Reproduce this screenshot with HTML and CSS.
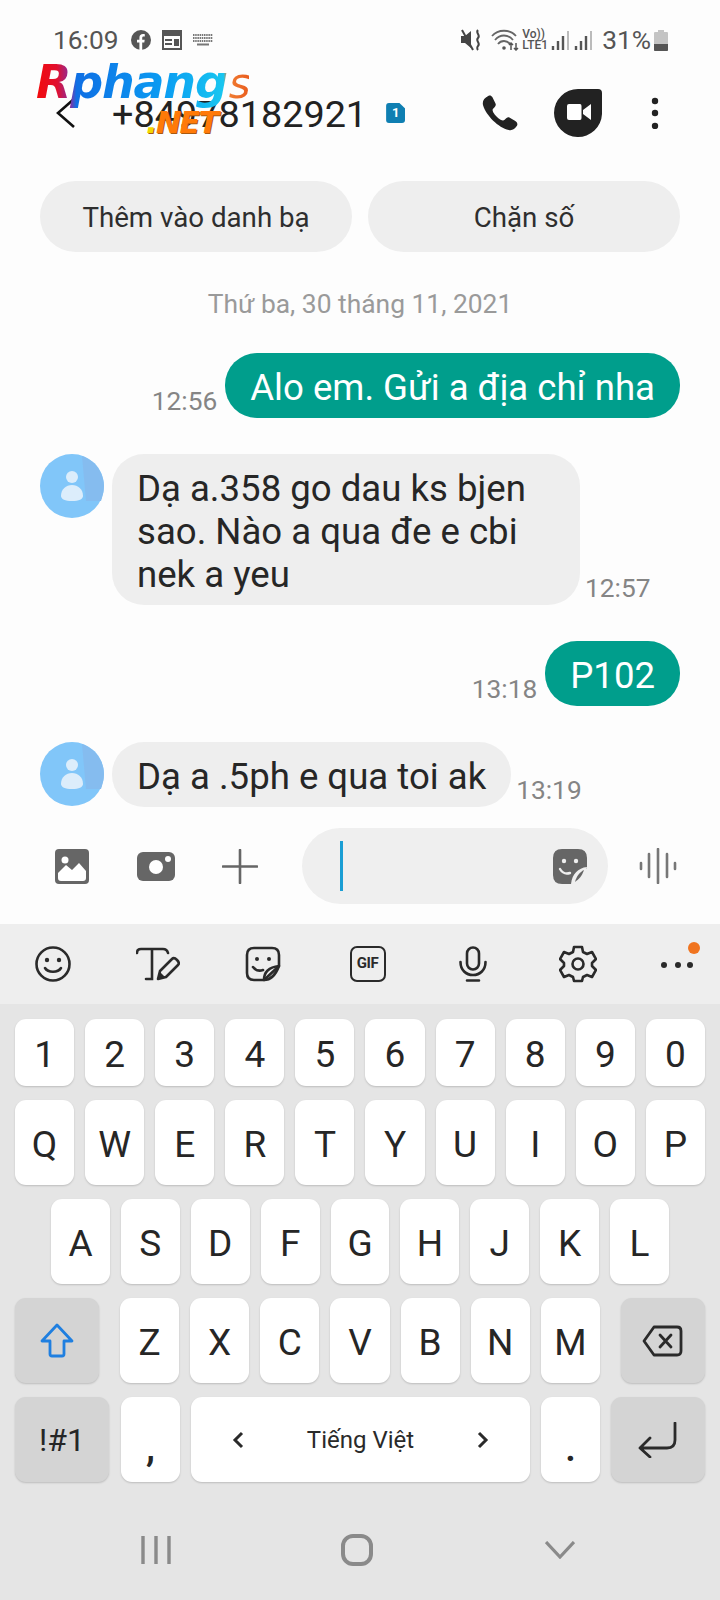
FILE: index.html
```html
<!DOCTYPE html>
<html lang="vi">
<head>
    <meta charset="UTF-8">
    <meta name="viewport" content="width=device-width, initial-scale=1.0">
    <title>Tin nhắn</title>
    <link rel="stylesheet" href="styles.css">
</head>
<body>
<div class="phone">
    <div class="status">
        <span class="clock">16:09</span>
        <svg class="st-fb" width="20" height="20" viewBox="0 0 20 20"><circle cx="10" cy="10" r="10" fill="#555"/><path d="M8.4 20V12.6H6V9.8H8.4V7.7C8.4 5.3 9.8 4 12 4C12.9 4 13.8 4.2 13.8 4.2V6.6H12.6C11.5 6.6 11.2 7.3 11.2 8V9.8H13.7L13.3 12.6H11.2V20Z" fill="#fdfdfd"/></svg>
        <svg class="st-cal" width="20" height="20" viewBox="0 0 20 20"><path d="M1 1H19V19H1Z" fill="none" stroke="#555" stroke-width="2"/><path d="M1 1H19V6H1ZM3 9H10V11H3ZM3 13H10V15H3ZM12 9H17V16H12Z" fill="#555"/></svg>
        <svg class="st-kb" width="20" height="12" viewBox="0 0 20 12"><path d="M0 1H20M0 4H20M0 7H20" stroke="#777" stroke-width="2" stroke-dasharray="1.5 .7"/><path d="M4 10.5H16" stroke="#777" stroke-width="2"/></svg>
        <div class="status-right">
            <svg width="23" height="22" viewBox="0 0 23 22"><path d="M0 7H4L10 2V19L4 14H0Z" fill="#444"/><path d="M1 1L12 21" stroke="#444" stroke-width="2"/><path d="M17 1C14 4 20 6 17 9C14 12 20 14 17 17C16 18 16 20 17 21" fill="none" stroke="#444" stroke-width="2"/></svg>
            <svg class="st-wifi" width="28" height="22" viewBox="0 0 28 22"><path d="M1 7C7 0 19 0 25 7M4 11C9 5 17 5 22 11M7 15C10 11 16 11 19 15" fill="none" stroke="#666" stroke-width="1.8"/><circle cx="13" cy="19" r="1.8" fill="#555"/><path d="M20 21V14M18 16L20 14 22 16M25 14V21M23 19L25 21 27 19" fill="none" stroke="#555" stroke-width="1.5"/></svg>
            <div class="volte"><span>Vo))</span><span>LTE1</span></div>
            <svg class="st-sig" width="19" height="20" viewBox="0 0 19 20"><path d="M2 16V20M7 11V20M12 6V20" stroke="#555" stroke-width="2.4"/><path d="M17 1V20" stroke="#bbb" stroke-width="2"/></svg>
            <svg class="st-sig2" width="19" height="20" viewBox="0 0 19 20"><path d="M2 16V20M7 11V20M12 6V20" stroke="#555" stroke-width="2.4"/><path d="M17 1V20" stroke="#bbb" stroke-width="2"/></svg>
            <span class="pct">31%</span>
            <svg class="st-bat" width="14" height="21" viewBox="0 0 14 21"><path d="M4 0H10V2H13A1 1 0 0 1 14 3V20A1 1 0 0 1 13 21H1A1 1 0 0 1 0 20V3A1 1 0 0 1 1 2H4Z" fill="#c4c4c4"/><path d="M0 14H14V20A1 1 0 0 1 13 21H1A1 1 0 0 1 0 20Z" fill="#555"/></svg>
        </div>
    </div>

    <div class="header">
        <svg class="back" width="20" height="30" viewBox="0 0 20 30"><path d="M18 1L2 15L18 29" fill="none" stroke="#111" stroke-width="2.6"/></svg>
        <span class="number">+84978182921</span>
        <span class="sim">1</span>
        <svg class="call" width="37" height="36" viewBox="0 0 36 35"><path d="M7 1C9 0 10 1 11 2L14 8C15 10 14 11 12 13C11 14 11 15 12 17C14 20 16 22 19 24C21 25 22 25 23 24C25 22 26 21 28 22L33 25C35 26 36 28 35 30C33 33 30 35 27 34C17 32 5 20 2 10C1 6 3 3 7 1Z" fill="#222"/></svg>
        <svg class="duo" width="48" height="49" viewBox="0 0 48 49"><path d="M24 0H44Q48 0 48 4V25A24 24 0 1 1 24 0Z" fill="#222"/><path d="M15 15H26Q27.5 15 27.5 17V29Q27.5 31 26 31H15Q13 31 13 29V17Q13 15 15 15ZM29 21L37 15V31L29 25Z" fill="#fff"/></svg>
        <svg class="more" width="8" height="32" viewBox="0 0 8 32"><circle cx="4" cy="4" r="3.2" fill="#222"/><circle cx="4" cy="16" r="3.2" fill="#222"/><circle cx="4" cy="29" r="3.2" fill="#222"/></svg>
    </div>

    <!-- watermark on top of the header -->
    <div class="logo">Rphang<span class="logo-s">s</span></div>
    <div class="logo-net"><span class="net-dot">.</span>NET</div>

    <div class="actions">
        <div class="pill">Thêm vào danh bạ</div>
        <div class="pill">Chặn số</div>
    </div>

    <div class="date">Thứ ba, 30 tháng 11, 2021</div>

    <div class="msg msg-out first">
        <span class="time">12:56</span>
        <div class="bubble out">Alo em. Gửi a địa chỉ nha</div>
    </div>
    <div class="msg msg-in">
        <svg class="avatar" width="64" height="64" viewBox="0 0 64 64"><circle cx="32" cy="32" r="32" fill="#81c6f9"/><path d="M42 2A32 32 0 0 1 63 40Q62 44 61 47H46Z" fill="#85bcef"/><circle cx="32" cy="23" r="6" fill="#dcedfb"/><path d="M21 42C21 35 26 31 32 31C38 31 43 35 43 42C43 45 39 47 32 47C25 47 21 45 21 42Z" fill="#dcedfb"/></svg>
        <div class="bubble in wide">Dạ a.358 go dau ks bjen<br>sao. Nào a qua đe e cbi<br>nek a yeu</div>
        <span class="time">12:57</span>
    </div>
    <div class="msg msg-out">
        <span class="time">13:18</span>
        <div class="bubble out">P102</div>
    </div>
    <div class="msg msg-in last">
        <svg class="avatar" width="64" height="64" viewBox="0 0 64 64"><circle cx="32" cy="32" r="32" fill="#81c6f9"/><path d="M42 2A32 32 0 0 1 63 40Q62 44 61 47H46Z" fill="#85bcef"/><circle cx="32" cy="23" r="6" fill="#dcedfb"/><path d="M21 42C21 35 26 31 32 31C38 31 43 35 43 42C43 45 39 47 32 47C25 47 21 45 21 42Z" fill="#dcedfb"/></svg>
        <div class="bubble in">Dạ a .5ph e qua toi ak</div>
        <span class="time">13:19</span>
    </div>

    <div class="composer">
        <svg class="c-img" width="34" height="35" viewBox="0 0 34 35"><rect width="34" height="35" rx="4" fill="#666"/><circle cx="10" cy="11" r="3.5" fill="#fff"/><path d="M3 29V24L11 16L17 21L24 14L31 22V29Q31 32 28 32H6Q3 32 3 29Z" fill="#fff"/></svg>
        <svg class="c-cam" width="38" height="29" viewBox="0 0 38 29"><rect width="38" height="29" rx="6" fill="#666"/><circle cx="19" cy="15" r="7" fill="#fff"/><circle cx="31" cy="7" r="3" fill="#fff"/></svg>
        <svg class="c-plus" width="36" height="35" viewBox="0 0 36 35"><path d="M18 1V34M1 17.5H35" stroke="#666" stroke-width="2.6" stroke-linecap="round"/></svg>
        <div class="field">
            <span class="caret"></span>
            <svg class="c-sticker" width="34" height="35" viewBox="0 0 34 35"><path d="M9 0H25Q34 0 34 9V19L19 35H9Q0 35 0 26V9Q0 0 9 0Z" fill="#666"/><circle cx="11" cy="12" r="2.2" fill="#efefef"/><circle cx="23" cy="12" r="2.2" fill="#efefef"/><path d="M7 20C10 25 14 25 17 24" fill="none" stroke="#efefef" stroke-width="2.4" stroke-linecap="round"/><path d="M34 18C25 19 19 25 18 35H23C28 32 32 26 34 18Z" fill="#efefef"/><path d="M31 21C27 23 23.5 27 22 33C26 30 29 27 31 21Z" fill="#666"/></svg>
        </div>
        <svg class="c-voice" width="38" height="36" viewBox="0 0 38 36"><path d="M2 15V21M10 6V29M19 1V35M28 6V29M36 15V21" stroke="#777" stroke-width="2.6" stroke-linecap="round"/></svg>
    </div>

    <div class="toolbar">
        <div class="tool"><svg width="36" height="36" viewBox="0 0 36 36"><circle cx="18" cy="18" r="16.5" fill="none" stroke="#2a2a2a" stroke-width="2.6"/><circle cx="12" cy="14" r="2.2" fill="#2a2a2a"/><circle cx="24" cy="14" r="2.2" fill="#2a2a2a"/><path d="M10 22C13 27 23 27 26 22" fill="none" stroke="#2a2a2a" stroke-width="2.6" stroke-linecap="round"/></svg></div>
        <div class="tool"><svg width="44" height="34" viewBox="0 0 44 34"><path d="M1 6Q1 2 5 2H27Q31 2 32 6M16 2V32H10" fill="none" stroke="#2a2a2a" stroke-width="2.6" stroke-linecap="round"/><path d="M22 32L24 24L36 12Q38 10 41 13Q44 16 42 18L30 30Z" fill="none" stroke="#2a2a2a" stroke-width="2.6" stroke-linejoin="round"/><path d="M22 32L24 25L29 30Z" fill="#2a2a2a"/></svg></div>
        <div class="tool"><svg width="36" height="36" viewBox="0 0 36 36"><path d="M34 20V9Q34 2 27 2H9Q2 2 2 9V27Q2 34 9 34H19Z" fill="none" stroke="#2a2a2a" stroke-width="2.6" stroke-linejoin="round"/><circle cx="12" cy="13" r="2" fill="#2a2a2a"/><circle cx="24" cy="13" r="2" fill="#2a2a2a"/><path d="M8 21C11 25 15 25 18 24" fill="none" stroke="#2a2a2a" stroke-width="2.6" stroke-linecap="round"/><path d="M34 20C25 21 19 25 19 34C26 34 31 28 34 20Z" fill="none" stroke="#2a2a2a" stroke-width="2.6" stroke-linejoin="round"/></svg></div>
        <div class="tool"><div class="gif">GIF</div></div>
        <div class="tool"><svg width="28" height="36" viewBox="0 0 28 36"><rect x="8" y="1.5" width="12" height="22" rx="6" fill="none" stroke="#2a2a2a" stroke-width="2.6"/><path d="M1.5 16C1.5 24 7 29 14 29C21 29 26.5 24 26.5 16M8 34.5H20" fill="none" stroke="#2a2a2a" stroke-width="2.6" stroke-linecap="round"/></svg></div>
        <div class="tool"><svg width="38" height="38" viewBox="0 0 38 38"><path d="M15 2H23L24 7L28 9L33 7L37 14L33 18V21L37 25L33 32L28 30L24 32L23 36H15L14 32L10 30L5 32L1 25L5 21V18L1 14L5 7L10 9L14 7Z" fill="none" stroke="#2a2a2a" stroke-width="2.6" stroke-linejoin="round"/><circle cx="19" cy="19" r="5.5" fill="none" stroke="#2a2a2a" stroke-width="2.6"/></svg></div>
        <div class="tool tool-more"><svg width="40" height="44" viewBox="0 0 40 44"><circle cx="3" cy="23" r="3" fill="#2a2a2a"/><circle cx="17" cy="23" r="3" fill="#2a2a2a"/><circle cx="29" cy="23" r="3" fill="#2a2a2a"/><circle cx="33" cy="6" r="6" fill="#f0741f"/></svg></div>
    </div>

    <div class="keyboard">
        <div class="row row-num">
            <div class="key">1</div><div class="key">2</div><div class="key">3</div><div class="key">4</div><div class="key">5</div><div class="key">6</div><div class="key">7</div><div class="key">8</div><div class="key">9</div><div class="key">0</div>
        </div>
        <div class="row">
            <div class="key">Q</div><div class="key">W</div><div class="key">E</div><div class="key">R</div><div class="key">T</div><div class="key">Y</div><div class="key">U</div><div class="key">I</div><div class="key">O</div><div class="key">P</div>
        </div>
        <div class="row row-home">
            <div class="key">A</div><div class="key">S</div><div class="key">D</div><div class="key">F</div><div class="key">G</div><div class="key">H</div><div class="key">J</div><div class="key">K</div><div class="key">L</div>
        </div>
        <div class="row">
            <div class="key fn shift"><svg width="34" height="35" viewBox="0 0 34 35"><path d="M17 2L32 18H24V31Q24 33 22 33H12Q10 33 10 31V18H2Z" fill="none" stroke="#1f7fe0" stroke-width="2.8" stroke-linejoin="round"/></svg></div>
            <div class="key">Z</div><div class="key">X</div><div class="key">C</div><div class="key">V</div><div class="key">B</div><div class="key">N</div><div class="key">M</div>
            <div class="key fn del"><svg width="41" height="32" viewBox="0 0 41 32"><path d="M12 2H35Q39 2 39 6V26Q39 30 35 30H12L2 16Z" fill="none" stroke="#2a2a2a" stroke-width="2.8" stroke-linejoin="round"/><path d="M18 10L29 22M29 10L18 22" stroke="#2a2a2a" stroke-width="2.8" stroke-linecap="round"/></svg></div>
        </div>
        <div class="row">
            <div class="key fn sym">!#1</div>
            <div class="key punct">,</div>
            <div class="key space">
                <svg width="12" height="18" viewBox="0 0 12 18"><path d="M10 2L3 9L10 16" fill="none" stroke="#2a2a2a" stroke-width="3"/></svg>
                <span class="lang">Tiếng Việt</span>
                <svg width="12" height="18" viewBox="0 0 12 18"><path d="M2 2L9 9L2 16" fill="none" stroke="#2a2a2a" stroke-width="3"/></svg>
            </div>
            <div class="key punct">.</div>
            <div class="key fn enter"><svg width="40" height="36" viewBox="0 0 40 36"><path d="M37 1V18Q37 26 29 26H3M12 16L2 26L12 35" fill="none" stroke="#2a2a2a" stroke-width="2.8" stroke-linecap="round" stroke-linejoin="round"/></svg></div>
        </div>
    </div>

    <div class="nav">
        <svg width="30" height="30" viewBox="0 0 30 30"><path d="M2 1V29M15 1V29M28 1V29" stroke="#8a8a8a" stroke-width="3.4"/></svg>
        <svg width="32" height="32" viewBox="0 0 32 32"><rect x="2" y="2" width="28" height="28" rx="10" fill="none" stroke="#8a8a8a" stroke-width="4"/></svg>
        <svg width="30" height="18" viewBox="0 0 30 18"><path d="M1 1L15 16L29 1" fill="none" stroke="#8a8a8a" stroke-width="3.2"/></svg>
    </div>
</div>
</body>
</html>
```

FILE: styles.css
```css
* {
    box-sizing: border-box;
}
body {
    margin: 0;
    font-family: Roboto, "Noto Sans", sans-serif;
    background-color: #fdfdfd;
}
svg {
    display: block;
    flex: none;
}
.phone {
    position: relative;
    width: 720px;
    height: 1600px;
    overflow: hidden;
}

/* status bar */
.status {
    display: flex;
    align-items: center;
    height: 80px;
    padding: 0 52px 0 53px;
    color: #555;
}
.clock {
    font-size: 26.3px;
    margin-right: 12px;
}
.st-cal {
    margin-left: 11px;
}
.st-kb {
    margin-left: 11px;
}
.status-right {
    display: flex;
    align-items: center;
    margin-left: auto;
}
.st-wifi {
    margin-left: 7px;
}
.volte {
    display: flex;
    flex-direction: column;
    margin-left: 3px;
    font-size: 12px;
    line-height: 11px;
    font-weight: 500;
    width: 27px;
}
.st-sig {
    margin-left: 2px;
}
.st-sig2 {
    margin-left: 4px;
}
.pct {
    font-size: 26.3px;
    margin-left: 9px;
    margin-right: 3px;
}

/* header */
.header {
    display: flex;
    align-items: center;
    height: 66px;
    padding-left: 56px;
}
.number {
    font-size: 37.8px;
    line-height: 48px;
    padding-top: 2px;
    color: #222;
    margin-left: 36px;
}
.sim {
    width: 19px;
    height: 20px;
    margin-left: 19px;
    background: #0f7fb2;
    color: #fff;
    font-size: 13px;
    font-weight: 700;
    line-height: 20px;
    text-align: center;
    border-radius: 3px;
    clip-path: polygon(0 0, 70% 0, 100% 28%, 100% 100%, 0 100%);
}
.call {
    margin-left: 76px;
}
.duo {
    margin-left: 36px;
}
.more {
    margin-left: 49px;
}
.logo {
    position: absolute;
    left: 36px;
    top: 53px;
    font-family: "DejaVu Sans", sans-serif;
    font-size: 46px;
    line-height: 58px;
    font-weight: 700;
    font-style: italic;
    letter-spacing: -1.2px;
    background: linear-gradient(90deg, #f40a0a 0%, #e01030 10%, #8a2ea0 16%, #0f6fe4 19%, #0a9cf2 60%, #18c6f0 88%, #f08034 90%, #ea5c1e 100%);
    -webkit-background-clip: text;
    background-clip: text;
    color: transparent;
}
.logo-s {
    font-size: 42px;
    font-weight: 400;
    margin-left: 2px;
}
.logo-net {
    position: absolute;
    left: 146px;
    top: 105px;
    font-family: "DejaVu Sans", sans-serif;
    font-size: 30px;
    line-height: 36px;
    font-weight: 700;
    font-style: italic;
    letter-spacing: -1.5px;
    color: #ff7a08;
    text-shadow: 1px 1px 0 #a85a10;
}
.net-dot {
    color: #f2d800;
}

/* contact actions */
.actions {
    display: flex;
    gap: 16px;
    margin-top: 35px;
    padding: 0 40px;
}
.pill {
    flex: 1;
    height: 71px;
    background: #eeeeee;
    border-radius: 36px;
    color: #2e2e2e;
    font-size: 27.7px;
    line-height: 73px;
    text-align: center;
}
.date {
    margin-top: 37px;
    height: 30px;
    font-size: 26.4px;
    line-height: 30px;
    color: #9a9a9a;
    text-align: center;
}

/* conversation */
.msg {
    display: flex;
    align-items: flex-end;
    gap: 8px;
    margin-top: 36px;
    padding: 0 40px;
}
.msg.first {
    margin-top: 34px;
}
.msg-out {
    justify-content: flex-end;
}
.bubble {
    padding: 13px 25px 9px;
    border-radius: 32px;
    font-size: 36.6px;
    line-height: 43px;
}
.bubble.out {
    background: #009e8c;
    color: #fff;
}
.bubble.in {
    background: #eeeeee;
    color: #262626;
}
.bubble.wide {
    width: 468px;
}
.msg-in .time {
    margin-left: -3px;
}
.avatar {
    align-self: flex-start;
}
.time {
    font-size: 26.3px;
    line-height: 30px;
    color: #858585;
    margin-bottom: 2px;
}

/* input row */
.composer {
    display: flex;
    align-items: center;
    height: 76px;
    margin-top: 21px;
    padding-left: 55px;
}
.c-cam {
    margin-left: 48px;
}
.c-plus {
    margin-left: 47px;
}
.field {
    display: flex;
    align-items: center;
    justify-content: space-between;
    width: 306px;
    height: 76px;
    margin-left: 44px;
    padding: 0 21px 0 38px;
    background: #efefef;
    border-radius: 38px;
}
.caret {
    width: 3px;
    height: 50px;
    background: #1a9ed4;
}
.c-voice {
    margin-left: 31px;
}

/* keyboard */
.toolbar {
    display: flex;
    align-items: center;
    height: 80px;
    margin-top: 20px;
    background: #eeeeee;
}
.tool {
    display: flex;
    justify-content: center;
    width: 105px;
    flex: none;
}
.tool-more svg {
    margin-left: -4px;
}
.gif {
    width: 36px;
    height: 36px;
    border: 2.6px solid #2a2a2a;
    border-radius: 7px;
    color: #2a2a2a;
    font-size: 15px;
    font-weight: 700;
    line-height: 31px;
    text-align: center;
    letter-spacing: -.5px;
}
.keyboard {
    display: flex;
    flex-direction: column;
    gap: 14px;
    height: 596px;
    padding: 15px 15px 0;
    background: #e5e5e5;
}
.row {
    display: flex;
    gap: 11px;
    height: 85px;
    flex: none;
}
.row-num {
    height: 67px;
}
.row-home {
    padding: 0 36px;
}
.key {
    flex: 1 1 0;
    display: flex;
    align-items: center;
    justify-content: center;
    padding-top: 4px;
    background: #fff;
    border-radius: 11px;
    box-shadow: 0 1px 2px rgba(0, 0, 0, .18);
    color: #262626;
    font-size: 37px;
}
.key.fn {
    background: #d4d4d4;
    padding-top: 0;
}
.shift,
.del {
    flex: 0 0 84px;
}
.shift {
    margin-right: 10px;
}
.del {
    margin-left: 10px;
}
.sym,
.enter {
    flex: 0 0 94px;
}
.sym {
    font-size: 32px;
    margin-right: 1px;
}
.punct {
    flex: 0 0 59px;
    font-size: 40px;
    font-weight: 500;
    padding-top: 16px;
}
.space {
    flex: 1 1 0;
    justify-content: space-between;
    padding: 0 41px;
    font-size: 24px;
}
.lang {
    color: #2a2a2a;
}

/* nav bar */
.nav {
    position: absolute;
    left: 0;
    right: 0;
    bottom: 34px;
    display: flex;
    align-items: center;
}
.nav svg:nth-child(1) {
    margin-left: 141px;
}
.nav svg:nth-child(2) {
    margin-left: 170px;
}
.nav svg:nth-child(3) {
    margin-left: 172px;
}
```
